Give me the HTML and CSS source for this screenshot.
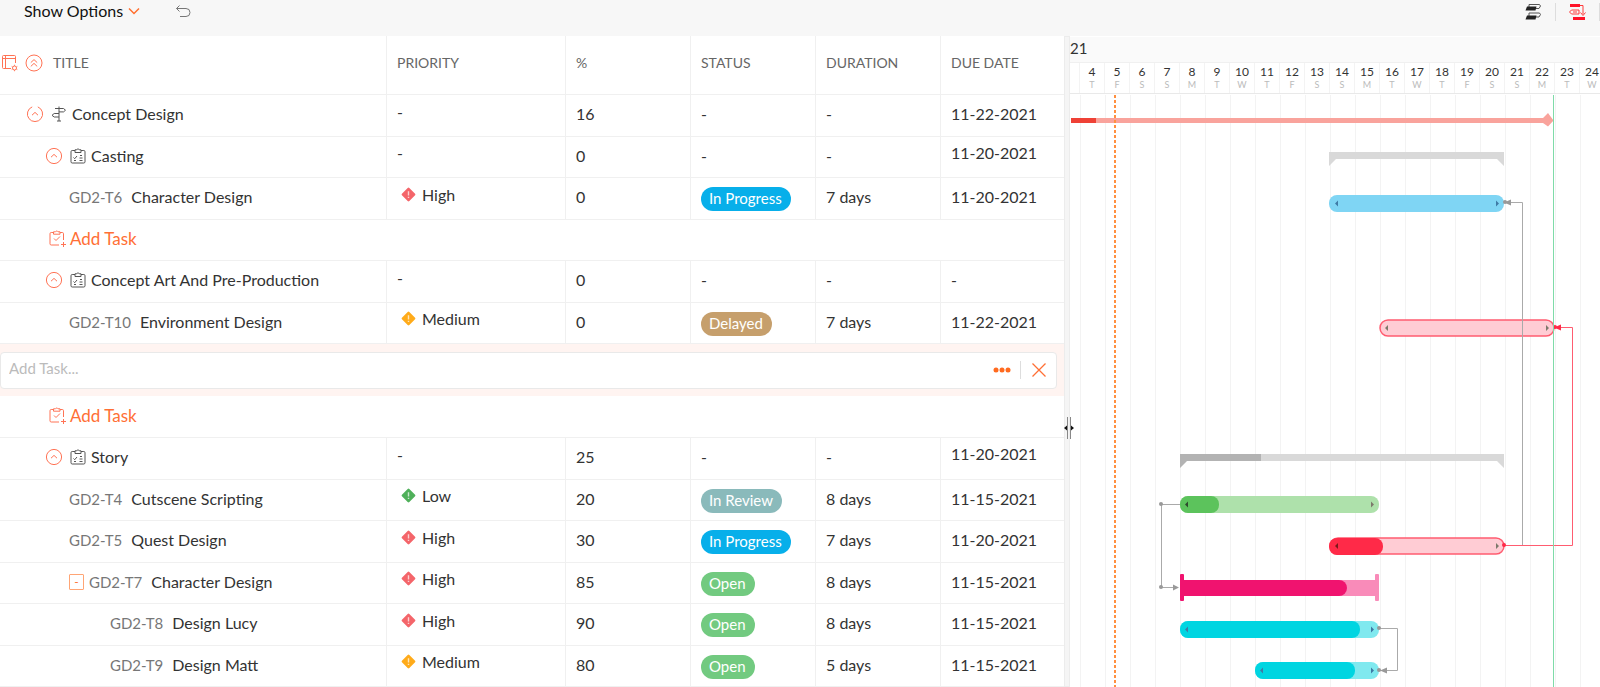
FILE: index.html
```html
<!DOCTYPE html>
<html lang="en">
<head>
    <meta charset="UTF-8">
    <meta name="viewport" content="width=device-width, initial-scale=1.0">
    <title>Gantt</title>
    <link rel="stylesheet" href="styles.css">
</head>

<body>
    <!-- icon set -->
    <svg class="sprite" aria-hidden="true">
        <symbol id="collapse" viewBox="0 0 18 18">
            <circle cx="9" cy="9" r="7.6"/>
            <path d="M6 10.2l3-2.8 3 2.8"/>
        </symbol>
        <symbol id="collapse-open" viewBox="0 0 18 18">
            <path d="M6.2 1.9a7.6 7.6 0 1 0 5.6 0M6 10.2l3-2.8 3 2.8"/>
        </symbol>
        <symbol id="collapse-all" viewBox="0 0 18 18">
            <circle cx="9" cy="9" r="8"/>
            <path d="M5.8 8.6L9 5.6l3.2 3M5.8 12.4L9 9.4l3.2 3"/>
        </symbol>
        <symbol id="columns" viewBox="0 0 18 18">
            <path d="M11 14.500H3.500a1 1 0 0 1-1-1V2.500a1 1 0 0 1 1-1H14.500a1 1 0 0 1 1 1V9M2.500 4.500h13M5.500 1.500v13"/>
            <circle cx="14.500" cy="14" r="2"/>
            <path d="M14.500 10.800v1M14.500 16.200v1M11.700 12.400l.9.500M16.400 15.100l.9.500M11.700 15.600l.9-.500M16.400 12.900l.9-.500"/>
        </symbol>
        <symbol id="milestone" viewBox="0 0 16 16">
            <path d="M8 .5V15M6 15h4M4 2.500h8.500l2 1.700-2 1.700H8M8 7.500H3.200L1 9.300 3.200 11H8"/>
        </symbol>
        <symbol id="tasklist" viewBox="0 0 16 16">
            <path d="M5 2.500H2.200a1.200 1.200 0 0 0-1.200 1.200v10.100A1.200 1.200 0 0 0 2.200 15h11.600a1.200 1.200 0 0 0 1.200-1.200V3.700a1.200 1.200 0 0 0-1.200-1.200H11M5 1.800h1.700a1.400 1.400 0 0 1 2.600 0H11v2.700H5zM3.500 9.500l1.200 1.200L7 8M4 12.500h2M10 7.500h2M9.500 10h3M9.500 12.500h3"/>
        </symbol>
        <symbol id="add" viewBox="0 0 18 18">
            <path d="M4.500 2.500H2.200A1.200 1.200 0 0 0 1 3.700v10.100A1.200 1.200 0 0 0 2.200 15H10M11 2.500h2.300a1.200 1.200 0 0 1 1.200 1.200V10M4.500 1.800h2a1.400 1.400 0 0 1 2.500 0h2v2.400H4.500zM5 8.500l2 2 4-4M14.500 12v5M12 14.500h5"/>
        </symbol>
        <symbol id="priority" viewBox="0 0 16 16">
            <path class="diamond" d="M8 .6q.5 0 .9.400l6.100 6.100q.8.900 0 1.800L8.900 15q-.9.800-1.800 0L1 8.900q-.8-.900 0-1.800L7.100 1q.4-.4.9-.4z"/>
            <path class="mark" d="M8 4.500v4.500M8 10.500v1.200"/>
        </symbol>
    </svg>

    <header class="toolbar">
        <button class="options" type="button">Show Options
            <svg width="12" height="8" viewBox="0 0 12 8"><path d="M1 1.500l5 5 5-5"/></svg>
        </button>
        <button class="undo" type="button" aria-label="Undo">
            <svg width="16" height="14" viewBox="0 0 16 14"><path d="M4.500 1.500L1.500 4.500l3 3M1.500 4.500h9.500a4 4 0 0 1 0 8H5"/></svg>
        </button>
        <div class="tools">
            <button type="button" aria-label="Baseline">
                <svg width="18" height="18" viewBox="0 0 18 18">
                    <path class="outline" d="M5 1.500h10.500l1 1.500-1.500 2.500H5zM5 10h10.500l1 1.500-1.500 2.500H5z"/>
                    <path class="solid" d="M3 3.500h9.500l-1 4H1.500zM3 12.500h9.500l-1 4H1.500z"/>
                </svg>
            </button>
            <button class="critical" type="button" aria-label="Critical path">
                <svg width="18" height="18" viewBox="0 0 18 18">
                    <path class="solid" d="M2 1h10v3H2zM5 14h12v3H5z"/>
                    <path class="line" d="M12 2.500h3V11M12.500 9.500l2.500 3 2.500-3M3.500 7h7.500v4H3.500L1.500 9zM5 9h4"/>
                </svg>
            </button>
        </div>
    </header>

    <main class="gantt">
        <section class="grid">
            <table>
                <colgroup>
                    <col>
                    <col class="col-priority">
                    <col class="col-small">
                    <col class="col-small">
                    <col class="col-small">
                    <col class="col-date">
                </colgroup>
                <thead>
                    <tr>
                        <th>
                            <div class="title head">
                                <svg class="icon orange"><use href="#columns"/></svg>
                                <svg class="icon orange"><use href="#collapse-all"/></svg>
                                <span>TITLE</span>
                            </div>
                        </th>
                        <th>PRIORITY</th>
                        <th>%</th>
                        <th>STATUS</th>
                        <th>DURATION</th>
                        <th>DUE DATE</th>
                    </tr>
                </thead>
                <tbody>
                    <tr>
                        <td><div class="title project"><svg class="icon orange"><use href="#collapse-open"/></svg><svg class="icon-sm"><use href="#milestone"/></svg>Concept Design</div></td>
                        <td class="priority">-</td>
                        <td>16</td>
                        <td>-</td>
                        <td>-</td>
                        <td>11-22-2021</td>
                    </tr>
                    <tr>
                        <td><div class="title list"><svg class="icon orange"><use href="#collapse"/></svg><svg class="icon-sm"><use href="#tasklist"/></svg>Casting</div></td>
                        <td class="priority">-</td>
                        <td>0</td>
                        <td>-</td>
                        <td>-</td>
                        <td class="rollup">11-20-2021</td>
                    </tr>
                    <tr>
                        <td><div class="title task"><span class="key">GD2-T6</span>Character Design</div></td>
                        <td class="priority high"><svg class="flag"><use href="#priority"/></svg>High</td>
                        <td>0</td>
                        <td><span class="pill progress">In Progress</span></td>
                        <td>7 days</td>
                        <td>11-20-2021</td>
                    </tr>
                    <tr>
                        <td colspan="6"><button class="add" type="button"><svg class="icon orange"><use href="#add"/></svg>Add Task</button></td>
                    </tr>
                    <tr>
                        <td><div class="title list"><svg class="icon orange"><use href="#collapse"/></svg><svg class="icon-sm"><use href="#tasklist"/></svg>Concept Art And Pre-Production</div></td>
                        <td class="priority">-</td>
                        <td>0</td>
                        <td>-</td>
                        <td>-</td>
                        <td>-</td>
                    </tr>
                    <tr>
                        <td><div class="title task"><span class="key">GD2-T10</span>Environment Design</div></td>
                        <td class="priority medium"><svg class="flag"><use href="#priority"/></svg>Medium</td>
                        <td>0</td>
                        <td><span class="pill delayed">Delayed</span></td>
                        <td>7 days</td>
                        <td>11-22-2021</td>
                    </tr>
                    <tr class="new-task">
                        <td colspan="6">
                            <div class="new-box">
                                <input type="text" placeholder="Add Task..." aria-label="Add Task">
                                <button class="more" type="button" aria-label="More">
                                    <svg width="18" height="6" viewBox="0 0 18 6"><circle cx="3" cy="3" r="2.500"/><circle cx="9" cy="3" r="2.500"/><circle cx="15" cy="3" r="2.500"/></svg>
                                </button>
                                <button class="close" type="button" aria-label="Close">
                                    <svg width="16" height="16" viewBox="0 0 16 16"><path d="M1.500 1.500l13 13M14.500 1.500l-13 13"/></svg>
                                </button>
                            </div>
                        </td>
                    </tr>
                    <tr>
                        <td colspan="6"><button class="add" type="button"><svg class="icon orange"><use href="#add"/></svg>Add Task</button></td>
                    </tr>
                    <tr>
                        <td><div class="title list"><svg class="icon orange"><use href="#collapse"/></svg><svg class="icon-sm"><use href="#tasklist"/></svg>Story</div></td>
                        <td class="priority">-</td>
                        <td>25</td>
                        <td>-</td>
                        <td>-</td>
                        <td class="rollup">11-20-2021</td>
                    </tr>
                    <tr>
                        <td><div class="title task"><span class="key">GD2-T4</span>Cutscene Scripting</div></td>
                        <td class="priority low"><svg class="flag"><use href="#priority"/></svg>Low</td>
                        <td>20</td>
                        <td><span class="pill review">In Review</span></td>
                        <td>8 days</td>
                        <td>11-15-2021</td>
                    </tr>
                    <tr>
                        <td><div class="title task"><span class="key">GD2-T5</span>Quest Design</div></td>
                        <td class="priority high"><svg class="flag"><use href="#priority"/></svg>High</td>
                        <td>30</td>
                        <td><span class="pill progress">In Progress</span></td>
                        <td>7 days</td>
                        <td>11-20-2021</td>
                    </tr>
                    <tr>
                        <td><div class="title task"><button class="toggle" type="button">-</button><span class="key">GD2-T7</span>Character Design</div></td>
                        <td class="priority high"><svg class="flag"><use href="#priority"/></svg>High</td>
                        <td>85</td>
                        <td><span class="pill open">Open</span></td>
                        <td>8 days</td>
                        <td>11-15-2021</td>
                    </tr>
                    <tr>
                        <td><div class="title subtask"><span class="key">GD2-T8</span>Design Lucy</div></td>
                        <td class="priority high"><svg class="flag"><use href="#priority"/></svg>High</td>
                        <td>90</td>
                        <td><span class="pill open">Open</span></td>
                        <td>8 days</td>
                        <td>11-15-2021</td>
                    </tr>
                    <tr>
                        <td><div class="title subtask"><span class="key">GD2-T9</span>Design Matt</div></td>
                        <td class="priority medium"><svg class="flag"><use href="#priority"/></svg>Medium</td>
                        <td>80</td>
                        <td><span class="pill open">Open</span></td>
                        <td>5 days</td>
                        <td>11-15-2021</td>
                    </tr>
                </tbody>
            </table>
        </section>

        <div class="splitter">
            <svg class="handle" width="10" height="22" viewBox="0 0 10 22">
                <path class="rail" d="M3.500 0v22M6.500 0v22"/>
                <path d="M0 11l3-2.500v5zM10 11L7 8.500v5z"/>
            </svg>
        </div>

        <section class="chart">
            <div class="period">21</div>
            <ol class="days">
                <li class="first"></li>
                <li>4<small>T</small></li>
                <li>5<small>F</small></li>
                <li>6<small>S</small></li>
                <li>7<small>S</small></li>
                <li>8<small>M</small></li>
                <li>9<small>T</small></li>
                <li>10<small>W</small></li>
                <li>11<small>T</small></li>
                <li>12<small>F</small></li>
                <li>13<small>S</small></li>
                <li>14<small>S</small></li>
                <li>15<small>M</small></li>
                <li>16<small>T</small></li>
                <li>17<small>W</small></li>
                <li>18<small>T</small></li>
                <li>19<small>F</small></li>
                <li>20<small>S</small></li>
                <li>21<small>S</small></li>
                <li>22<small>M</small></li>
                <li>23<small>T</small></li>
                <li>24<small>W</small></li>
            </ol>
            <!-- one day is 25 units wide, day 4 starts at x=10 -->
            <svg class="bars">
                <!-- project -->
                <path fill="#f9a39c" d="M1 23h472l5-5 5.500 7.500-5.500 6-5-3.500H1z"/>
                <path fill="#ef4136" d="M1 23h25v5H1z"/>

                <!-- task list summaries -->
                <path fill="#d9d9d9" d="M259 57h175v14l-7-7H266l-7 7z"/>
                <path fill="#d9d9d9" d="M110 359h324v14l-7-7H110z"/>
                <path fill="#b3b3b3" d="M110 359h81v7h-74l-7 7z"/>

                <!-- tasks -->
                <rect x="259" y="100" width="175" height="17" rx="8" fill="#7fd5f4"/>
                <rect x="310" y="225" width="174" height="16" rx="8" fill="#ffccd4" stroke="#ff5c70" stroke-width="1.500"/>
                <rect x="110" y="401" width="199" height="17" rx="8" fill="#aee1ab"/>
                <rect x="110" y="401" width="39" height="17" rx="8" fill="#5cc35c"/>
                <rect x="260" y="443" width="174" height="16" rx="8" fill="#ffccd4" stroke="#ff5c70" stroke-width="1.500"/>
                <rect x="259" y="443" width="54" height="17" rx="8" fill="#ff2a48"/>
                <path fill="#f98bb9" d="M110 485h195v16H110z"/>
                <rect x="305" y="479" width="4" height="27" rx="1" fill="#f98bb9"/>
                <path fill="#f0136f" d="M112 485h157a8 8 0 0 1 0 16H112z"/>
                <rect x="110" y="479" width="4" height="27" rx="1" fill="#f0136f"/>
                <rect x="110" y="526" width="199" height="17" rx="8" fill="#80e9ef"/>
                <rect x="110" y="526" width="180" height="17" rx="8" fill="#00d5e1"/>
                <rect x="185" y="567" width="124" height="17" rx="8" fill="#80e9ef"/>
                <rect x="185" y="567" width="100" height="17" rx="8" fill="#00d5e1"/>

                <!-- resize arrows -->
                <g fill="#3f7ba6">
                    <path d="M265 108.500l3-3v6zM429 108.500l-3-3v6z"/>
                    <path d="M115 534.500l3-3v6zM304 534.500l-3-3v6z"/>
                    <path d="M190 575.500l3-3v6zM304 575.500l-3-3v6z"/>
                </g>
                <g fill="#7d796b">
                    <path d="M315 233l3-3v6zM479 233l-3-3v6zM429 451l-3-3v6z"/>
                    <path d="M304 409.500l-3-3v6z"/>
                </g>
                <path fill="#2e4a2e" d="M115 409.500l3-3v6z"/>
                <path fill="#7a1a1a" d="M265 451l3-3v6z"/>

                <!-- dependencies -->
                <g class="link">
                    <path d="M434 107.500h18.500v343"/>
                    <path d="M110 409.500H91.500v83H108"/>
                    <path d="M309 533.500h18.500v42H309"/>
                </g>
                <g fill="#999">
                    <circle cx="435" cy="107" r="2"/>
                    <circle cx="91" cy="409" r="2"/>
                    <circle cx="91" cy="492" r="2"/>
                    <circle cx="309" cy="533" r="2"/>
                    <circle cx="309" cy="575" r="2"/>
                    <path d="M434 107.500l7-3v6zM310 575.500l7-3v6zM109 492.500l-6-3v6z"/>
                </g>
                <path class="link critical" d="M484 232.500h18.500v218H434"/>
                <g fill="#ff2a48">
                    <circle cx="434" cy="450" r="2"/>
                    <circle cx="485" cy="232" r="2"/>
                    <path d="M484 232.500l7-3v6z"/>
                </g>

                <line class="end" x1="483.500" y1="0" x2="483.500" y2="100%"/>
                <line class="today" x1="45" y1="0" x2="45" y2="100%"/>
            </svg>
        </section>
    </main>
</body>

</html>
```
FILE: styles.css
```css
* {
    box-sizing: border-box;
}

body {
    margin: 0;
    min-height: 100vh;
    display: flex;
    flex-direction: column;
    overflow: hidden;
    background-color: #fff;
    color: #333;
    font-family: Lato, "Liberation Sans", sans-serif;
    font-size: 16px;
    line-height: 20px;
}

button, input {
    border: 0;
    padding: 0;
    background: none;
    color: inherit;
    font: inherit;
}

button {
    cursor: pointer;
}

svg {
    display: block;
    flex: none;
    fill: none;
}

.sprite {
    position: absolute;
    width: 0;
    height: 0;
}

/* toolbar */
.toolbar {
    display: flex;
    align-items: flex-start;
    height: 36px;
    padding-left: 24px;
    background-color: #f7f7f7;
}

.options {
    display: flex;
    align-items: center;
    gap: 5px;
    height: 22px;
    color: #111;
}

.options svg {
    stroke: #ff6f2f;
    stroke-width: 1.5;
}

.undo {
    display: flex;
    align-items: center;
    height: 22px;
    margin-left: 35px;
}

.undo svg {
    stroke: #777;
}

.tools {
    display: flex;
    margin-left: auto;
    padding-top: 3px;
}

.tools button {
    padding: 0 13px 0 12px;
}

.tools .solid {
    fill: #222;
}

.tools .outline {
    stroke: #555;
}

.tools .critical {
    border-left: 1px solid #ddd;
    border-right: 1px solid #ddd;
}

.critical .solid {
    fill: #ff1328;
}

.critical .line {
    stroke: #ff3b3b;
}

/* layout */
.gantt {
    flex: 1;
    display: flex;
}

.grid {
    width: 66.5%;
}

/* grid */
table {
    width: 100%;
    table-layout: fixed;
    border-collapse: separate;
    border-spacing: 0;
}

.col-priority {
    width: 179px;
}

.col-small {
    width: 125px;
}

.col-date {
    width: 123px;
}

th, td {
    padding: 0 0 0 10px;
    border-bottom: 1px solid #f0f0f0;
    border-right: 1px solid #f0f0f0;
    text-align: left;
}

th:first-child, td:first-child {
    padding-left: 0;
}

th:last-child, td:last-child {
    border-right: 0;
}

th {
    height: 59px;
    padding-bottom: 4px;
    color: #666;
    font-size: 14px;
    font-weight: 400;
}

td {
    height: 42px;
    padding-bottom: 3px;
    white-space: nowrap;
}

tr:nth-child(even) td {
    height: 41px;
}

.title {
    display: flex;
    align-items: center;
}

.icon {
    width: 18px;
    height: 18px;
}

.icon-sm {
    width: 16px;
    height: 16px;
    stroke: #555;
}

.orange {
    stroke: #ff7355;
}

.head {
    gap: 7px;
}

.head span {
    padding-left: 3px;
}

.project {
    padding-left: 26px;
}

.list {
    padding-left: 45px;
}

.project .icon-sm, .list .icon-sm {
    margin: 0 5px 0 7px;
}

.task {
    padding-left: 69px;
}

.subtask {
    padding-left: 110px;
}

.key {
    margin-right: 9px;
    color: #777;
    font-size: 15px;
}

.toggle {
    width: 15px;
    height: 16px;
    margin-right: 5px;
    border: 1px solid #ffa575;
    border-radius: 1px;
    color: #ff6f2f;
    font-size: 12px;
    line-height: 12px;
}

td.priority {
    padding-bottom: 8px;
}

td.rollup {
    padding-bottom: 9px;
}

.flag {
    display: inline-block;
    width: 15px;
    height: 15px;
    margin: 0 6px 0 4px;
    vertical-align: -1px;
}

.diamond {
    fill: currentColor;
}

.mark {
    stroke: #fff;
    stroke-opacity: 0.7;
    stroke-width: 1.5;
}

.high .flag {
    color: #f4656a;
}

.medium .flag {
    color: #ffab1a;
}

.low .flag {
    color: #4fb05a;
}

.pill {
    display: inline-block;
    height: 24px;
    margin-top: 4px;
    padding: 0 9px 0 8px;
    border-radius: 12px;
    color: #fff;
    font-size: 15px;
    line-height: 22px;
    vertical-align: middle;
}

.progress {
    background-color: #07afea;
}

.delayed {
    background-color: #c69f6c;
}

.review {
    background-color: #8ababb;
}

.open {
    background-color: #72ca80;
}

.add {
    display: flex;
    align-items: center;
    gap: 3px;
    margin-left: 49px;
    color: #ff6f35;
    font-size: 17px;
}

/* inline new task box */
.new-task td {
    height: 53px;
    padding: 0 7px 0 0;
    border-bottom-color: #fff;
    background-color: #fff4f1;
}

.new-box {
    display: flex;
    align-items: center;
    height: 37px;
    border: 1px solid #e9e9e9;
    border-radius: 4px;
    background-color: #fff;
}

.new-box input {
    flex: 1;
    padding: 0 0 4px 8px;
    font-size: 15px;
    outline: 0;
}

.new-box input::placeholder {
    color: #bbb;
    opacity: 1;
}

.more {
    padding-right: 9px;
    border-right: 1px solid #ddd;
    line-height: 18px;
    height: 18px;
}

.more svg {
    fill: #ff6a1f;
}

.close {
    padding: 0 9px 0 10px;
}

.close svg {
    stroke: #ff6f35;
    stroke-width: 1.3;
}

/* splitter */
.splitter {
    position: relative;
    flex: 0 0 6px;
    border: 1px solid #ececec;
    background-color: #f5f5f5;
}

.handle {
    position: absolute;
    top: 380px;
    left: -1px;
    z-index: 1;
    fill: #111;
}

.rail {
    stroke: #888;
}

/* chart */
.chart {
    flex: 1;
    min-width: 0;
    display: flex;
    flex-direction: column;
    overflow: hidden;
}

.period {
    height: 26px;
    border-top: 1px solid #fff;
    background-color: #fafafa;
    font-size: 15px;
    line-height: 23px;
}

.days {
    display: flex;
    height: 32px;
    margin: 0;
    padding: 0;
    border-top: 1px solid #f0f0f0;
    border-bottom: 1px solid #e9e9e9;
    list-style: none;
}

.days li {
    flex: 0 0 25px;
    padding-top: 2px;
    border-right: 1px solid #f3f3f3;
    font-size: 12px;
    line-height: 14px;
    text-align: center;
}

.days .first {
    flex-basis: 10px;
}

.days small {
    display: block;
    color: #bbb;
    font-size: 9px;
    line-height: 12px;
}

.bars {
    flex: 1;
    width: 100%;
    margin-top: 1px;
    background-image: linear-gradient(90deg, #f3f3f3 1px, transparent 1px);
    background-position: 10px 0;
    background-size: 25px 100%;
}

.link {
    stroke: #aaa;
}

.link.critical {
    stroke: #ff5c70;
}

.end {
    stroke: #7fdba8;
}

.today {
    stroke: #ff9040;
    stroke-width: 2;
    stroke-dasharray: 3 2;
}
```
